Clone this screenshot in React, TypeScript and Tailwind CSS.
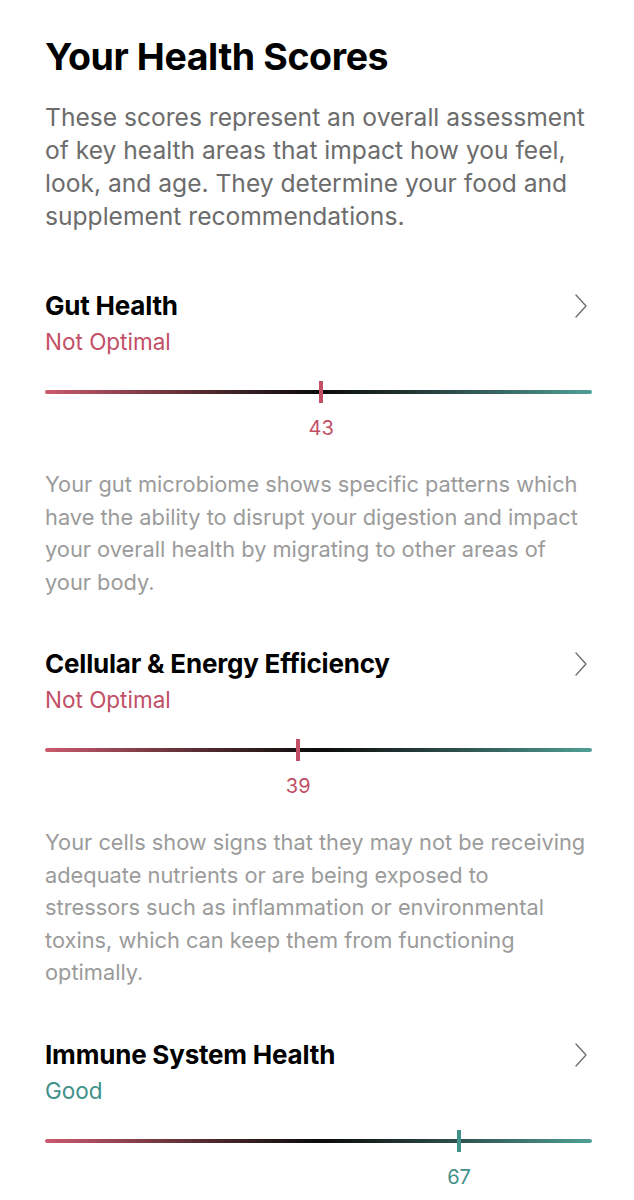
type Score = {
  title: string;
  status: string;
  good: boolean;
  value: number;
  pos: number; // marker position along the track, percent
  desc: string;
};

const scores: Score[] = [
  {
    title: "Gut Health",
    status: "Not Optimal",
    good: false,
    value: 43,
    pos: 50.5,
    desc: "Your gut microbiome shows specific patterns which have the ability to disrupt your digestion and impact your overall health by migrating to other areas of your body.",
  },
  {
    title: "Cellular & Energy Efficiency",
    status: "Not Optimal",
    good: false,
    value: 39,
    pos: 46.3,
    desc: "Your cells show signs that they may not be receiving adequate nutrients or are being exposed to stressors such as inflammation or environmental toxins, which can keep them from functioning optimally.",
  },
  {
    title: "Immune System Health",
    status: "Good",
    good: true,
    value: 67,
    pos: 75.7,
    desc: "",
  },
];

function Chevron() {
  return (
    <svg width="14" height="26" viewBox="0 0 14 26" className="mt-[3px] mr-[4px]" fill="none">
      <polyline points="2,2 12,13 2,24" stroke="#707070" strokeWidth="1.4" strokeLinecap="round" strokeLinejoin="round" />
    </svg>
  );
}

function ScoreCard({ s }: { s: Score }) {
  const color = s.good ? "text-[#3f918a]" : "text-[#c24f66]";
  return (
    <div className="mb-[50px]">
      <div className="flex items-start justify-between">
        <h2 className="text-[26px] leading-[32px] font-bold tracking-[-0.2px] text-black">{s.title}</h2>
        <Chevron />
      </div>
      <div className={`mt-[5px] text-[22.5px] leading-[30px] ${color}`}>{s.status}</div>

      <div className="relative mt-[24px] h-[22px] flex items-center">
        <div className="h-[4px] w-full rounded-full bg-gradient-to-r from-[#cc5a6e] via-[#0b0b0b] to-[#4fa097]" />
        <div
          className={`absolute top-0 h-[22px] w-[4px] -ml-[2px] ${s.good ? "bg-[#3f918a]" : "bg-[#c24f66]"}`}
          style={{ left: `${s.pos}%` }}
        />
      </div>
      <div className="relative mt-[13px] h-[24px]">
        <span
          className={`absolute top-0 -translate-x-1/2 text-[20px] leading-[24px] ${color}`}
          style={{ left: `${s.pos}%` }}
        >
          {s.value}
        </span>
      </div>

      {s.desc && (
        <p className="mt-[28px] mr-[5px] text-[21.8px] leading-[32.5px] text-[#9b9b9b]">{s.desc}</p>
      )}
    </div>
  );
}

export default function App() {
  return (
    <div className="min-h-screen bg-white pl-[45px] pr-[42px] pt-[37px] font-['Inter',sans-serif]">
      <h1 className="text-[37.5px] leading-[40px] font-bold tracking-[-0.4px] text-black">Your Health Scores</h1>
      <p className="mt-[24px] text-[24.6px] leading-[33px] text-[#6c6c6c]">
        These scores represent an overall assessment of key health areas that impact how you feel, look, and age. They
        determine your food and supplement recommendations.
      </p>
      <div className="mt-[57px]">
        {scores.map((s) => (
          <ScoreCard key={s.title} s={s} />
        ))}
      </div>
    </div>
  );
}
